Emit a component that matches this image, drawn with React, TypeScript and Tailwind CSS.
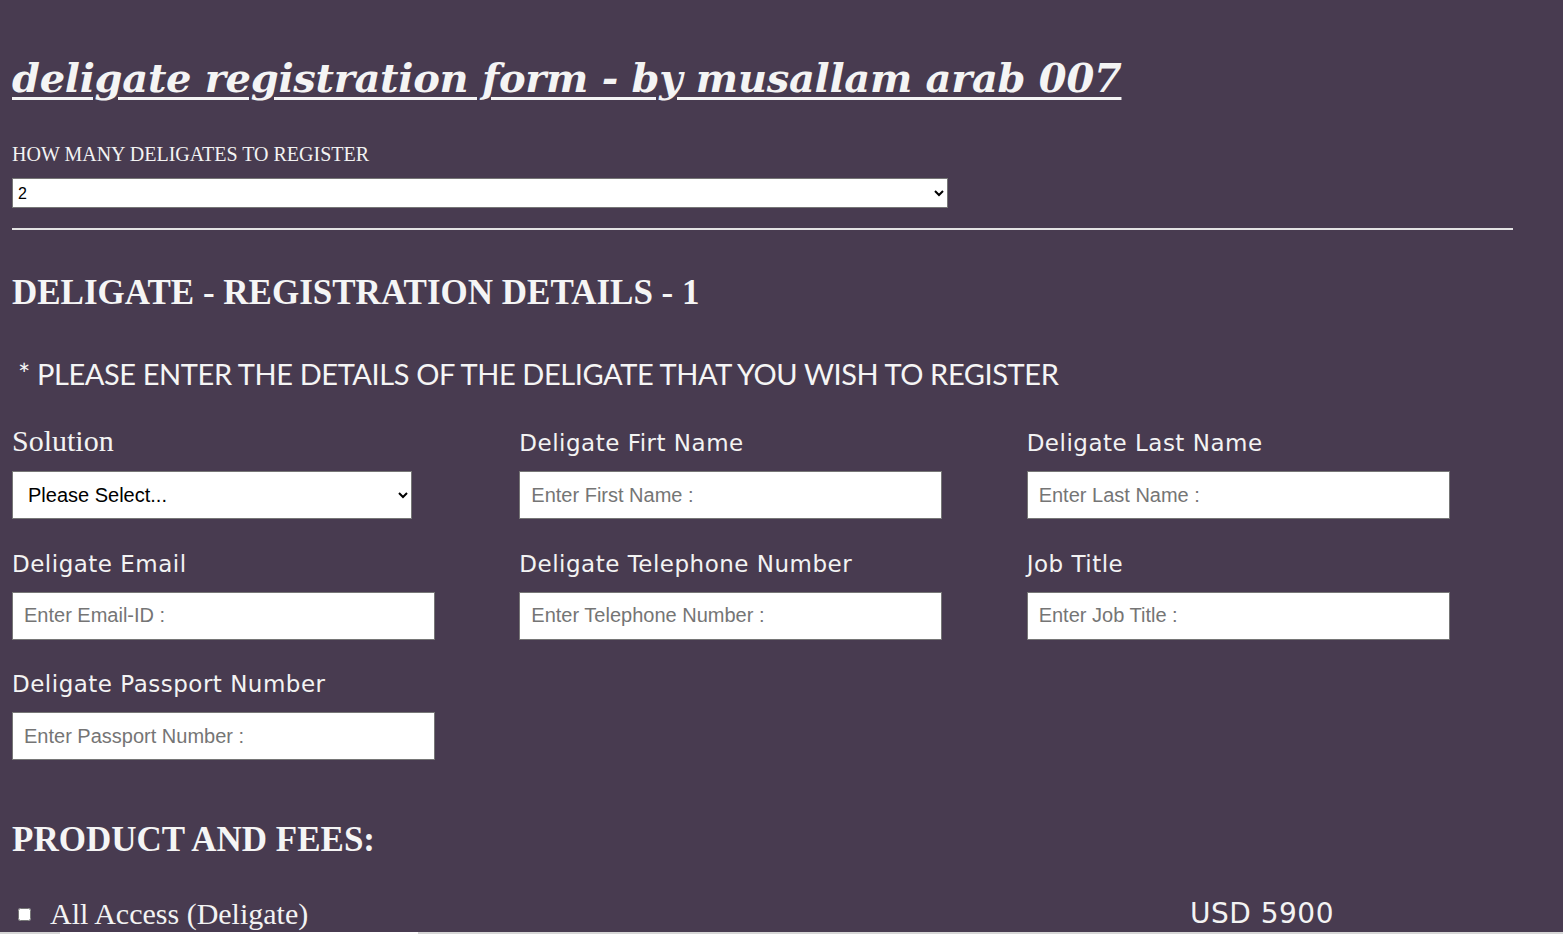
import React from "react";

const sans = { fontFamily: '"DejaVu Sans", sans-serif' };

function Field({ label, placeholder, serif = false, select = false }: { label: string; placeholder?: string; serif?: boolean; select?: boolean }) {
  return (
    <div className="flex flex-col">
      {serif ? (
        <label className="h-[40px] shrink-0 font-['Liberation_Serif',serif] text-[30px] leading-[36px] text-[#f3f3f3]">{label}</label>
      ) : (
        <label className="h-[40px] shrink-0 font-['DejaVu_Sans',sans-serif] text-[23px] leading-[40px] tracking-[0.5px] text-[#f3f3f3]">{label}</label>
      )}
      {select ? (
        <select className="mt-[8px] h-[48px] w-[400px] shrink-0 border border-[#767676] bg-white pl-[11px] pr-[8px] font-['Liberation_Sans',Arial,sans-serif] text-[20px] text-black">
          <option>Please Select...</option>
        </select>
      ) : (
        <input
          type="text"
          placeholder={placeholder}
          className="mt-[8px] h-[48px] w-[423px] shrink-0 border border-[#767676] bg-white px-[11px] font-['Liberation_Sans',Arial,sans-serif] text-[20px] text-black placeholder:text-[#757575]"
        />
      )}
    </div>
  );
}

export default function App() {
  return (
    <div className="flex h-[934px] flex-col overflow-hidden bg-[#483b50]">
      <div className="h-[932px] shrink-0 overflow-hidden px-[12px]">
        {/* heading */}
        <h1 className="mt-[50px] font-['DejaVu_Serif',serif] text-[40px] font-bold italic leading-[56px] tracking-[-0.3px] text-[#f4f4f4] underline decoration-[3px] underline-offset-[5px]">
          deligate registration form - by musallam arab 007
        </h1>

        <p className="mt-[36px] font-['Liberation_Serif',serif] text-[20px] leading-[24px] text-[#f3f3f3]">HOW MANY DELIGATES TO REGISTER</p>
        <select className="mt-[12px] block h-[30px] w-[936px] border border-[#767676] bg-white pl-[1px] font-['Liberation_Sans',Arial,sans-serif] text-[16px] text-black">
          <option>2</option>
        </select>

        <div className="mt-[20px] h-[2px] w-[1501px] bg-[#e3e3e3]" />

        <h2 className="mt-[43px] font-['Liberation_Serif',serif] text-[35px] font-bold leading-[40px] text-[#f5f5f5]">
          DELIGATE - REGISTRATION DETAILS - 1
        </h2>

        <p className="mt-[41px] pl-[6px] font-['Lato',sans-serif] text-[29px] leading-[40px] tracking-[-0.4px] text-[#f5f5f5]">
          * PLEASE ENTER THE DETAILS OF THE DELIGATE THAT YOU WISH TO REGISTER
        </p>

        {/* delegate fields */}
        <div className="mt-[29px] grid w-[1522px] grid-cols-3 gap-y-[24.5px]">
          <Field label="Solution" serif select />
          <Field label="Deligate Firt Name" placeholder="Enter First Name :" />
          <Field label="Deligate Last Name" placeholder="Enter Last Name :" />
          <Field label="Deligate Email" placeholder="Enter Email-ID :" />
          <Field label="Deligate Telephone Number" placeholder="Enter Telephone Number :" />
          <Field label="Job Title" placeholder="Enter Job Title :" />
          <Field label="Deligate Passport Number" placeholder="Enter Passport Number :" />
        </div>

        <h2 className="mt-[60px] font-['Liberation_Serif',serif] text-[35px] font-bold leading-[40px] text-[#f5f5f5]">PRODUCT AND FEES:</h2>

        <div className="mt-[34px] flex h-[40px] items-center">
          <div className="flex w-[1178px] items-center">
            <input type="checkbox" className="ml-[6px] h-[13px] w-[13px]" />
            <span className="ml-[19px] font-['Liberation_Serif',serif] text-[30px] leading-[40px] text-[#f3f3f3]">All Access (Deligate)</span>
          </div>
          <span style={sans} className="text-[28px] leading-[40px] tracking-[0.5px] text-[#f3f3f3]">USD 5900</span>
        </div>
      </div>

      {/* bottom strip */}
      <div className="flex h-[2px] shrink-0 bg-[#d6d6d6]">
        <div className="ml-[60px] w-[358px] bg-white" />
      </div>
    </div>
  );
}
